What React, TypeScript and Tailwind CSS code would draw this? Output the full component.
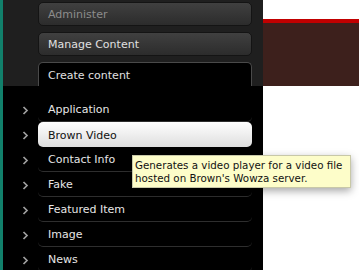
const items = ["Application", "Brown Video", "Contact Info", "Fake", "Featured Item", "Image", "News"];

function Chevron() {
  return (
    <svg width="7" height="9" viewBox="0 0 7 9" className="block">
      <path d="M1.5 1 L5 4.5 L1.5 8" fill="none" stroke="#a0a0a0" strokeWidth="1.7" />
    </svg>
  );
}

function MenuRow({ label, active }: { label: string; active?: boolean }) {
  return (
    <div className="flex h-[25px] items-center">
      <div className="flex w-[35px] justify-center pl-[10px] pt-[1px]">
        <Chevron />
      </div>
      {active ? (
        <div className="flex h-[25px] w-[214px] items-center rounded-[5px] bg-gradient-to-b from-[#ffffff] to-[#dedede] pl-[10px] pt-[3px] text-[#111]">
          {label}
        </div>
      ) : (
        <div className="flex h-[25px] w-[214px] items-center rounded-b-[5px] border-b border-[#2e2e2e] pl-[10px] pt-[3px] text-[#e6e6e6]">
          {label}
        </div>
      )}
    </div>
  );
}

export default function App() {
  return (
    <div className="relative flex h-[270px] w-[359px] overflow-hidden bg-white text-[11px]" style={{ fontFamily: '"DejaVu Sans", sans-serif' }}>
      <div className="w-[3px] bg-[#11806b]" />
      <div className="flex w-[260px] flex-col bg-black">
        <div className="flex h-[86px] flex-col bg-[#1f1f1f] pl-[35px] pr-[11px] pt-[2px]">
          <div className="flex h-[24px] items-center rounded-[5px] border border-[#141414] bg-gradient-to-b from-[#404040] to-[#2c2c2c] pl-[9px] pt-[2px] text-[#8c8c8c]">
            Administer
          </div>
          <div className="mt-[6px] flex h-[24px] items-center rounded-[5px] border border-[#141414] bg-gradient-to-b from-[#404040] to-[#2c2c2c] pl-[9px] pt-[2px] text-[#e0e0e0]">
            Manage Content
          </div>
          <div className="mt-[6px] flex h-[24px] items-center rounded-t-[5px] border-x border-t border-[#4a4a4a] bg-black pl-[9px] pt-[3px] text-[#e0e0e0]">
            Create content
          </div>
        </div>
        <div className="flex flex-col pt-[11px]">
          {items.map((label) => (
            <MenuRow key={label} label={label} active={label === "Brown Video"} />
          ))}
        </div>
      </div>
      <div className="flex flex-1 flex-col">
        <div className="h-[19px] bg-white" />
        <div className="h-[4px] bg-[#c10000]" />
        <div className="h-[63px] bg-[#3d201c]" />
      </div>
      <div className="absolute left-[132px] top-[155px] w-[219px] whitespace-nowrap border border-[#c8c8a8] bg-[#fdfdc9] px-[2px] pb-[2px] pt-[3px] text-[10.3px] leading-[13px] text-[#111] shadow-[0_3px_8px_rgba(0,0,0,0.35)]">
        Generates a video player for a video file
        <br />
        hosted on Brown's Wowza server.
      </div>
    </div>
  );
}
